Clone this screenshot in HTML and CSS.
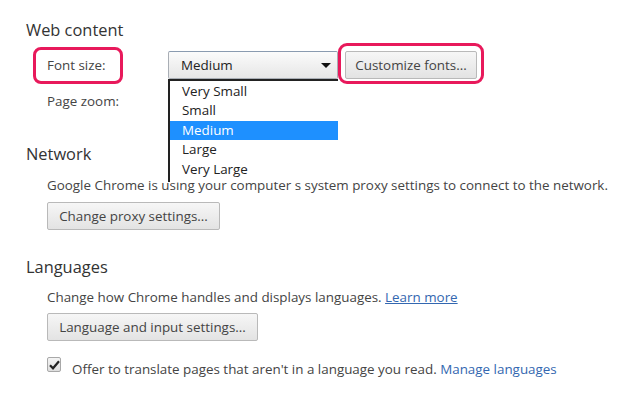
FILE: index.html
```html
<!DOCTYPE html>
<html>
<head>
<meta charset="utf-8">
<link rel="stylesheet" href="styles.css">
</head>
<body>
<div class="page">
  <section class="section">
    <h3 class="heading">Web content</h3>
    <div class="row">
      <div class="label"><span class="ring-label">Font size:</span></div>
      <div class="select-wrap">
        <div class="select">
          <span>Medium</span>
          <span class="arrow"></span>
        </div>
        <ul class="list">
          <li>Very Small</li>
          <li>Small</li>
          <li class="active">Medium</li>
          <li>Large</li>
          <li>Very Large</li>
        </ul>
      </div>
      <button class="btn ring-btn">Customize fonts...</button>
    </div>
    <div class="row row2">
      <div class="label">Page zoom:</div>
    </div>
  </section>

  <section class="section net">
    <h3 class="heading">Network</h3>
    <p class="text">Google Chrome is using your computer s system proxy settings to connect to the network.</p>
    <button class="btn">Change proxy settings...</button>
  </section>

  <section class="section lang">
    <h3 class="heading">Languages</h3>
    <p class="text">Change how Chrome handles and displays languages. <a class="link under">Learn more</a></p>
    <button class="btn">Language and input settings...</button>
    <div class="check-row">
      <span class="checkbox">
        <svg width="11" height="10" viewBox="0 0 11 10"><path d="M1 5.2 L4 8.3 L10 1.2" fill="none" stroke="#222" stroke-width="2.2"/></svg>
      </span>
      <span class="text">Offer to translate pages that aren't in a language you read. <a class="link">Manage languages</a></span>
    </div>
  </section>
</div>
</body>
</html>
```

FILE: styles.css
```css
* { box-sizing: border-box; }
html, body { margin: 0; padding: 0; background: #fff; }
body {
  font-family: "Open Sans", "Noto Sans", sans-serif;
  color: #444;
  font-size: 13.4px;
}
.page { padding: 19px 0 0 26px; }
.section { margin: 0; }
.heading {
  margin: 0;
  font-weight: 400;
  font-size: 16.4px;
  line-height: 22px;
  color: #333;
}
.row {
  display: flex;
  align-items: center;
  margin-left: 21px;
  margin-top: 10px;
  height: 28px;
}
.row2 { margin-top: 8px; height: 28px; }
.label {
  width: 121px;
  font-size: 13.4px;
  color: #444;
}
.ring-label { position: relative; }
.ring-label::before {
  content: "";
  position: absolute;
  left: -14px; right: -17px;
  top: -9px; bottom: -10px;
  border: 3px solid #e8195b;
  border-radius: 8px;
}
.select-wrap { position: relative; width: 170px; height: 28px; }
.select {
  display: flex;
  align-items: center;
  justify-content: space-between;
  height: 28px;
  padding: 0 6px 0 12px;
  border: 1px solid #a9aeb5;
  border-top-color: #8a9bb0;
  border-radius: 2px;
  background: linear-gradient(#fbfbfb, #e6e6e6);
  color: #222;
  font-size: 13.4px;
}
.arrow {
  width: 0; height: 0;
  border-left: 5px solid transparent;
  border-right: 5px solid transparent;
  border-top: 5px solid #111;
}
.list {
  position: absolute;
  top: 28px;
  left: 0;
  width: 170px;
  margin: 0;
  padding: 1px 0 3px;
  list-style: none;
  background: #fff;
  border-top: 2px solid #222;
  border-left: 2px solid #222;
  color: #222;
  z-index: 2;
}
.list li {
  height: 19.4px;
  line-height: 19.4px;
  padding-left: 12px;
  font-size: 13.4px;
}
.list li.active { background: #1e90ff; color: #fff; }
.btn {
  font-family: inherit;
  font-size: 13.4px;
  color: #444;
  height: 28px;
  padding: 0 12px;
  border: 1px solid #b9b9b9;
  border-radius: 2px;
  background: linear-gradient(#f6f6f6, #e3e3e3);
  white-space: nowrap;
}
.ring-btn { position: relative; margin-left: 7px; width: 132px; padding: 0; }
.ring-btn::before {
  content: "";
  position: absolute;
  left: -8px; right: -8px;
  top: -9px; bottom: -6px;
  border: 3px solid #e8195b;
  border-radius: 9px;
}
.net { margin-top: 28px; }
.text { margin: 0; color: #444; font-size: 13.4px; line-height: 20px; }
.section .text { margin-left: 21px; }
.net .text { margin-top: 10px; }
.net .btn { margin: 7px 0 0 21px; width: 173px; padding: 0; }
.lang { margin-top: 26px; }
.lang .text { margin-top: 9px; }
.lang .btn { margin: 6px 0 0 21px; width: 211px; padding: 0; }
.link { color: #3367b0; }
.under { text-decoration: underline; }
.check-row {
  display: flex;
  align-items: center;
  margin: 9px 0 0 21px;
}
.check-row .text { margin-left: 11px; }
.checkbox {
  width: 14px; height: 15px;
  border: 1px solid #a8a8a8;
  border-radius: 2px;
  background: linear-gradient(#f4f4f4, #dedede);
  display: flex;
  align-items: center;
  justify-content: center;
}
```
